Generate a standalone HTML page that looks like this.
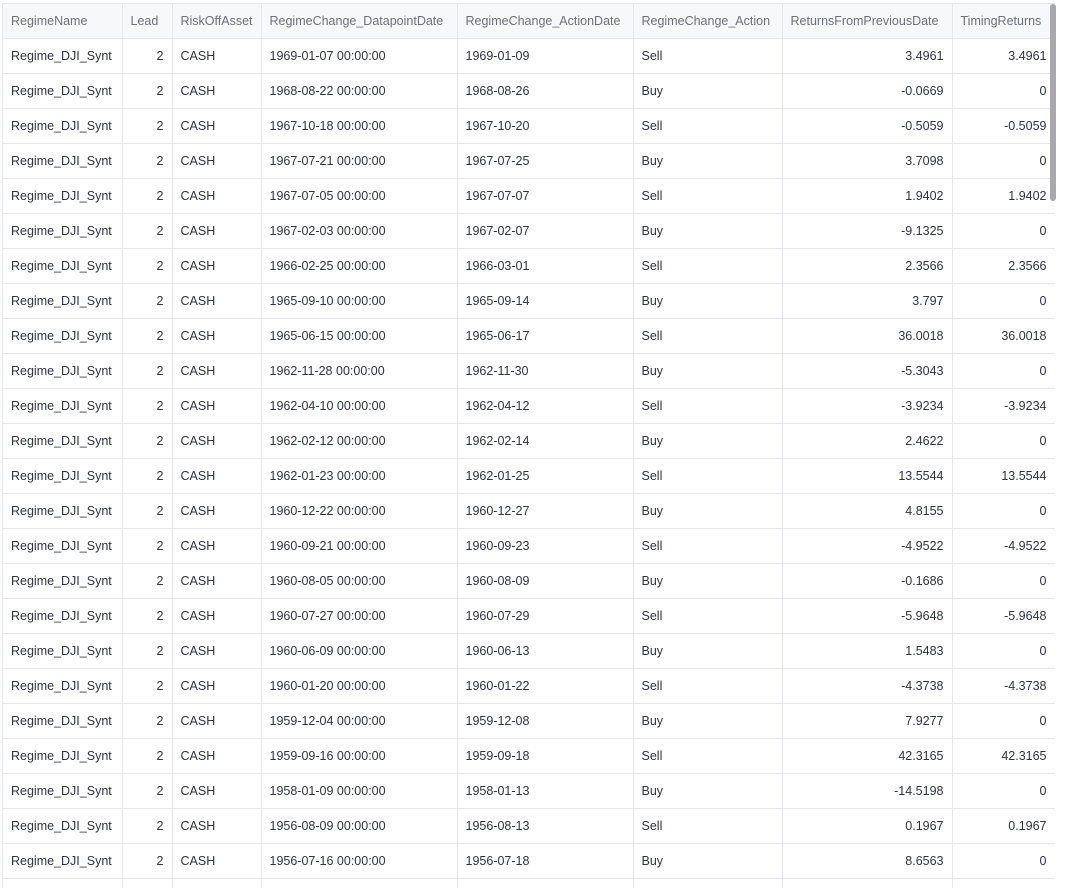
<!DOCTYPE html><html><head><style>
body{margin:0;background:#fff;font-family:"Liberation Sans",sans-serif;font-size:12.5px;color:#31333f}
.w{position:absolute;left:2px;top:3px;width:1052px;height:884px;overflow:hidden;border-left:1px solid #e6e7ea;border-top:1px solid #e6e7ea}
table{border-collapse:collapse;table-layout:fixed;width:1052px}
td,th{height:34px;border-right:1px solid #e6e7ea;border-bottom:1px solid #e6e7ea;padding:0 8px;white-space:nowrap;overflow:hidden;font-weight:normal}
th{background:#f7f8fa;color:#6d717a;text-align:left;height:34px}
td.r{text-align:right}
.sb{position:absolute;left:1050px;top:4px;width:6px;height:197px;background:#a8a8ad;border-radius:3px}
</style></head><body><div class="w"><table>
<colgroup><col style="width:119px"><col style="width:50px"><col style="width:89px"><col style="width:196px"><col style="width:176px"><col style="width:149px"><col style="width:170px"><col style="width:103px"></colgroup>
<tr><th>RegimeName</th><th>Lead</th><th>RiskOffAsset</th><th>RegimeChange_DatapointDate</th><th>RegimeChange_ActionDate</th><th>RegimeChange_Action</th><th>ReturnsFromPreviousDate</th><th>TimingReturns</th></tr>
<tr><td>Regime_DJI_Synt</td><td class="r">2</td><td>CASH</td><td>1969-01-07 00:00:00</td><td>1969-01-09</td><td>Sell</td><td class="r">3.4961</td><td class="r">3.4961</td></tr>
<tr><td>Regime_DJI_Synt</td><td class="r">2</td><td>CASH</td><td>1968-08-22 00:00:00</td><td>1968-08-26</td><td>Buy</td><td class="r">-0.0669</td><td class="r">0</td></tr>
<tr><td>Regime_DJI_Synt</td><td class="r">2</td><td>CASH</td><td>1967-10-18 00:00:00</td><td>1967-10-20</td><td>Sell</td><td class="r">-0.5059</td><td class="r">-0.5059</td></tr>
<tr><td>Regime_DJI_Synt</td><td class="r">2</td><td>CASH</td><td>1967-07-21 00:00:00</td><td>1967-07-25</td><td>Buy</td><td class="r">3.7098</td><td class="r">0</td></tr>
<tr><td>Regime_DJI_Synt</td><td class="r">2</td><td>CASH</td><td>1967-07-05 00:00:00</td><td>1967-07-07</td><td>Sell</td><td class="r">1.9402</td><td class="r">1.9402</td></tr>
<tr><td>Regime_DJI_Synt</td><td class="r">2</td><td>CASH</td><td>1967-02-03 00:00:00</td><td>1967-02-07</td><td>Buy</td><td class="r">-9.1325</td><td class="r">0</td></tr>
<tr><td>Regime_DJI_Synt</td><td class="r">2</td><td>CASH</td><td>1966-02-25 00:00:00</td><td>1966-03-01</td><td>Sell</td><td class="r">2.3566</td><td class="r">2.3566</td></tr>
<tr><td>Regime_DJI_Synt</td><td class="r">2</td><td>CASH</td><td>1965-09-10 00:00:00</td><td>1965-09-14</td><td>Buy</td><td class="r">3.797</td><td class="r">0</td></tr>
<tr><td>Regime_DJI_Synt</td><td class="r">2</td><td>CASH</td><td>1965-06-15 00:00:00</td><td>1965-06-17</td><td>Sell</td><td class="r">36.0018</td><td class="r">36.0018</td></tr>
<tr><td>Regime_DJI_Synt</td><td class="r">2</td><td>CASH</td><td>1962-11-28 00:00:00</td><td>1962-11-30</td><td>Buy</td><td class="r">-5.3043</td><td class="r">0</td></tr>
<tr><td>Regime_DJI_Synt</td><td class="r">2</td><td>CASH</td><td>1962-04-10 00:00:00</td><td>1962-04-12</td><td>Sell</td><td class="r">-3.9234</td><td class="r">-3.9234</td></tr>
<tr><td>Regime_DJI_Synt</td><td class="r">2</td><td>CASH</td><td>1962-02-12 00:00:00</td><td>1962-02-14</td><td>Buy</td><td class="r">2.4622</td><td class="r">0</td></tr>
<tr><td>Regime_DJI_Synt</td><td class="r">2</td><td>CASH</td><td>1962-01-23 00:00:00</td><td>1962-01-25</td><td>Sell</td><td class="r">13.5544</td><td class="r">13.5544</td></tr>
<tr><td>Regime_DJI_Synt</td><td class="r">2</td><td>CASH</td><td>1960-12-22 00:00:00</td><td>1960-12-27</td><td>Buy</td><td class="r">4.8155</td><td class="r">0</td></tr>
<tr><td>Regime_DJI_Synt</td><td class="r">2</td><td>CASH</td><td>1960-09-21 00:00:00</td><td>1960-09-23</td><td>Sell</td><td class="r">-4.9522</td><td class="r">-4.9522</td></tr>
<tr><td>Regime_DJI_Synt</td><td class="r">2</td><td>CASH</td><td>1960-08-05 00:00:00</td><td>1960-08-09</td><td>Buy</td><td class="r">-0.1686</td><td class="r">0</td></tr>
<tr><td>Regime_DJI_Synt</td><td class="r">2</td><td>CASH</td><td>1960-07-27 00:00:00</td><td>1960-07-29</td><td>Sell</td><td class="r">-5.9648</td><td class="r">-5.9648</td></tr>
<tr><td>Regime_DJI_Synt</td><td class="r">2</td><td>CASH</td><td>1960-06-09 00:00:00</td><td>1960-06-13</td><td>Buy</td><td class="r">1.5483</td><td class="r">0</td></tr>
<tr><td>Regime_DJI_Synt</td><td class="r">2</td><td>CASH</td><td>1960-01-20 00:00:00</td><td>1960-01-22</td><td>Sell</td><td class="r">-4.3738</td><td class="r">-4.3738</td></tr>
<tr><td>Regime_DJI_Synt</td><td class="r">2</td><td>CASH</td><td>1959-12-04 00:00:00</td><td>1959-12-08</td><td>Buy</td><td class="r">7.9277</td><td class="r">0</td></tr>
<tr><td>Regime_DJI_Synt</td><td class="r">2</td><td>CASH</td><td>1959-09-16 00:00:00</td><td>1959-09-18</td><td>Sell</td><td class="r">42.3165</td><td class="r">42.3165</td></tr>
<tr><td>Regime_DJI_Synt</td><td class="r">2</td><td>CASH</td><td>1958-01-09 00:00:00</td><td>1958-01-13</td><td>Buy</td><td class="r">-14.5198</td><td class="r">0</td></tr>
<tr><td>Regime_DJI_Synt</td><td class="r">2</td><td>CASH</td><td>1956-08-09 00:00:00</td><td>1956-08-13</td><td>Sell</td><td class="r">0.1967</td><td class="r">0.1967</td></tr>
<tr><td>Regime_DJI_Synt</td><td class="r">2</td><td>CASH</td><td>1956-07-16 00:00:00</td><td>1956-07-18</td><td>Buy</td><td class="r">8.6563</td><td class="r">0</td></tr>
<tr><td>&nbsp;</td><td></td><td></td><td></td><td></td><td></td><td></td><td></td></tr>
</table></div><div class="sb"></div></body></html>
